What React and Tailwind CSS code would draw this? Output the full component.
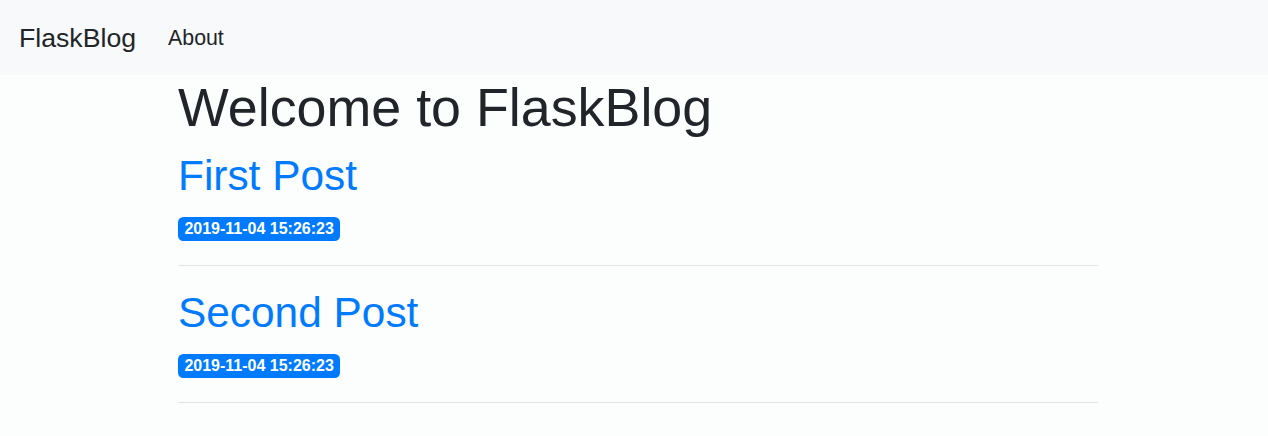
import React from "react";

const posts = [
  { title: "First Post", created: "2019-11-04 15:26:23" },
  { title: "Second Post", created: "2019-11-04 15:26:23" },
];

export default function App() {
  return (
    <div
      className="min-h-[436px] bg-[#fcfdfd] text-[#212529]"
      style={{ fontFamily: '"Liberation Sans", Arial, sans-serif' }}
    >
      <nav className="h-[75px] bg-[#f8f9fa] flex items-center px-[19px]">
        <a href="#" className="text-[26.67px] leading-[40px] mr-[21px] text-[#212529]">
          FlaskBlog
        </a>
        <a href="#" className="text-[21.33px] leading-[32px] px-[11px] text-[#212529]">
          About
        </a>
      </nav>

      <div className="ml-[178px] w-[920px]">
        <h1 className="text-[53.8px] leading-[64px] mb-[10.67px]">Welcome to FlaskBlog</h1>
        {posts.map((post, i) => (
          <div key={i}>
            <a href="#">
              <h2 className="text-[42.4px] leading-[51.2px] mb-[10.67px] text-[#007bff]">
                {post.title}
              </h2>
            </a>
            <div className="h-[32px] flex items-center pt-[2px]">
              <span className="inline-block bg-[#007bff] text-white font-bold text-[16px] leading-none px-[6.4px] py-[4px] rounded-[5.33px]">
                {post.created}
              </span>
            </div>
            <hr className="my-[21.33px] border-0 border-t border-[rgba(0,0,0,0.1)]" />
          </div>
        ))}
      </div>
    </div>
  );
}
